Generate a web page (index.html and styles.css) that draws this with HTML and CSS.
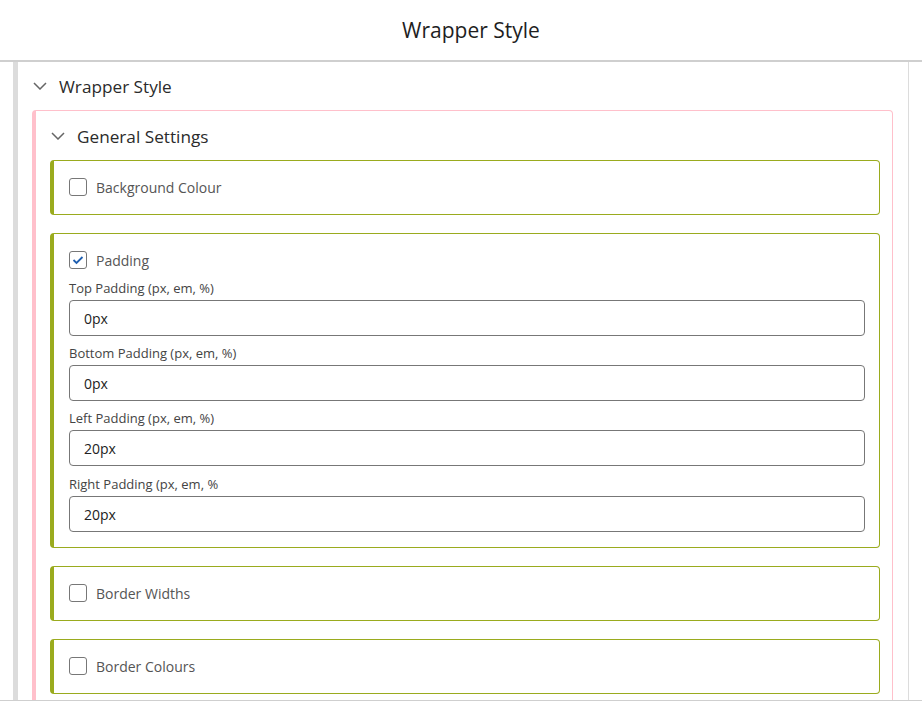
FILE: index.html
```html
<!DOCTYPE html>
<html lang="en">
<head>
<meta charset="utf-8">
<title>Wrapper Style</title>
<link rel="stylesheet" href="styles.css">
</head>
<body>
<header class="topbar"><h1 class="topbar-title">Wrapper Style</h1></header>
<div class="viewport">
  <div class="panel">
    <div class="section-head">
      <svg class="chev" width="14" height="8" viewBox="0 0 14 8"><polyline points="1,1 7,7 13,1" fill="none" stroke="#666" stroke-width="1.5"/></svg>
      <span class="section-title">Wrapper Style</span>
    </div>
    <div class="group">
      <div class="section-head group-head">
        <svg class="chev" width="14" height="8" viewBox="0 0 14 8"><polyline points="1,1 7,7 13,1" fill="none" stroke="#666" stroke-width="1.5"/></svg>
        <span class="section-title">General Settings</span>
      </div>
      <div class="card">
        <label class="check-row"><span class="box"></span><span class="check-label">Background Colour</span></label>
      </div>
      <div class="card">
        <label class="check-row"><span class="box checked"><svg width="12" height="10" viewBox="0 0 12 10"><polyline points="1.5,5 4.5,8 10.5,2" fill="none" stroke="#1f5fb0" stroke-width="1.8"/></svg></span><span class="check-label">Padding</span></label>
        <div class="field first"><div class="field-label">Top Padding (px, em, %)</div><div class="input">0px</div></div>
        <div class="field"><div class="field-label">Bottom Padding (px, em, %)</div><div class="input">0px</div></div>
        <div class="field"><div class="field-label">Left Padding (px, em, %)</div><div class="input">20px</div></div>
        <div class="field last"><div class="field-label">Right Padding (px, em, %</div><div class="input">20px</div></div>
      </div>
      <div class="card">
        <label class="check-row"><span class="box"></span><span class="check-label">Border Widths</span></label>
      </div>
      <div class="card">
        <label class="check-row"><span class="box"></span><span class="check-label">Border Colours</span></label>
      </div>
    </div>
  </div>
</div>
</body>
</html>
```
FILE: styles.css
```css
* { box-sizing: border-box; }
html, body { margin: 0; padding: 0; background: #fff; }
body {
  font-family: "Segoe UI", "Open Sans", "Noto Sans", sans-serif;
  color: #222;
  width: 922px;
  height: 701px;
  overflow: hidden;
}
.topbar {
  height: 62px;
  border-bottom: 2px solid #cfcfcf;
  display: flex;
  align-items: center;
  justify-content: center;
  padding-left: 20px;
}
.topbar-title {
  margin: 0;
  font-size: 21px;
  font-weight: 400;
  color: #1e1e1e;
}
.viewport {
  height: 639px;
  border-bottom: 1px solid #cfcfcf;
  overflow: hidden;
}
.panel {
  margin-left: 13px;
  width: 896px;
  height: 100%;
  border-left: 5px solid #dcdcdc;
  border-right: 1px solid #dcdcdc;
  padding: 12px 15px 0 14px;
}
.section-head {
  display: flex;
  align-items: center;
  height: 24px;
  padding-left: 1px;
  gap: 12px;
}
.section-title {
  font-size: 17.2px;
  color: #2b2b2b;
}
.chev { flex: none; }
.group {
  margin-top: 12px;
  border: 1px solid #ffc0cb;
  border-left: 4px solid #ffc0cb;
  border-radius: 4px;
  padding: 13px 12px 0 14px;
  height: 700px;
}
.group-head { padding-left: 1px; margin-bottom: 12px; }
.card {
  border: 1px solid #9aab1e;
  border-left: 4px solid #9aab1e;
  border-radius: 4px;
  padding: 16px 14px 17px 15px;
  margin-bottom: 18px;
}
.check-row {
  display: flex;
  align-items: center;
  height: 20px;
  gap: 9px;
}
.box {
  width: 18px;
  height: 18px;
  border: 1px solid #777;
  border-radius: 3px;
  display: flex;
  align-items: center;
  justify-content: center;
  flex: none;
}
.check-label {
  font-size: 14px;
  color: #555;
}
.card .field { margin-top: 8px; }
.card .field.first { margin-top: 9px; }
.card .field.last { margin-top: 9px; margin-bottom: -2px; }
.field-label {
  font-size: 13px;
  line-height: 18px;
  color: #444;
  margin-bottom: 3px;
}
.input {
  height: 36px;
  border: 1px solid #777;
  border-radius: 4px;
  padding: 0 14px;
  display: flex;
  align-items: center;
  font-size: 14px;
  color: #222;
}
```
